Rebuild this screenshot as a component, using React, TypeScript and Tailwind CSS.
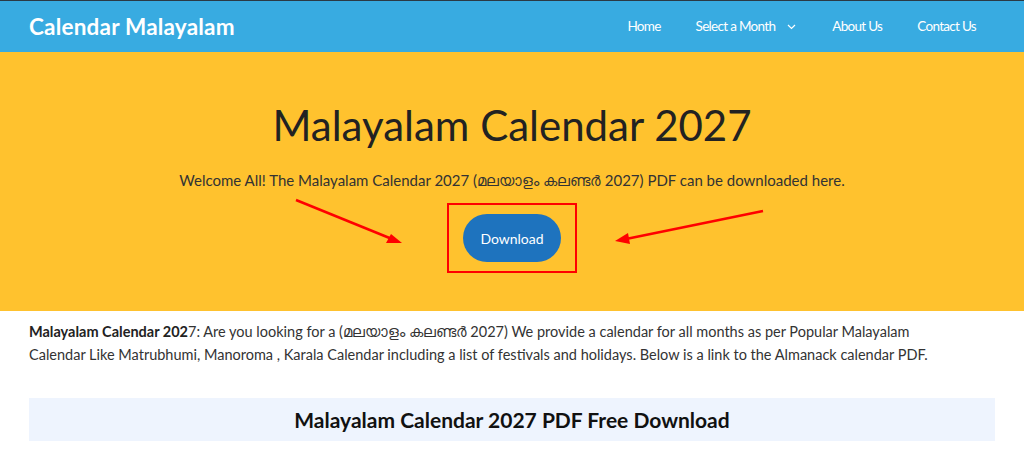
import React from "react";

const font = { fontFamily: "Lato, 'Noto Sans', sans-serif" };

export default function App() {
  return (
    <div className="w-[1024px] h-[462px] overflow-hidden bg-white text-[#222]" style={font}>
      <div className="h-px bg-[#2b3a45]" />
      <header className="h-[51px] bg-[#38abe1] flex items-center justify-between pl-[29px] pr-[48px]">
        <div className="text-white font-bold text-[22.5px] tracking-[0.2px]">Calendar Malayalam</div>
        <nav className="flex items-center text-white text-[13.5px] tracking-[-0.7px]">
          <span>Home</span>
          <span className="ml-[35px] flex items-center">
            Select a Month
            <svg className="ml-[12px]" width="9" height="6" viewBox="0 0 9 6" fill="none" stroke="white" strokeWidth="1.2">
              <path d="M1 1l3.5 3.5L8 1" />
            </svg>
          </span>
          <span className="ml-[36px]">About Us</span>
          <span className="ml-[35px]">Contact Us</span>
        </nav>
      </header>
      <section className="relative h-[259px] bg-[#ffc22e] flex flex-col items-center pt-[48px]">
        <h1 className="text-[42px] leading-[50px] font-normal text-[#222]">Malayalam Calendar 2027</h1>
        <p className="mt-[20px] text-[15px] leading-[20px] text-[#333]">
          Welcome All! The Malayalam Calendar 2027 (മലയാളം കലണ്ടർ 2027) PDF can be downloaded here.
        </p>
        <div className="mt-[13px] border-2 border-[#ff0000] px-[14px] py-[9px]">
          <button className="w-[98px] h-[48px] rounded-full bg-[#1e73be] text-white text-[14px]">Download</button>
        </div>
        <svg className="absolute left-0 top-0 pointer-events-none" width="1024" height="259" viewBox="0 0 1024 259">
          <line x1="296" y1="148" x2="392" y2="187" stroke="#ff0000" strokeWidth="2.5" />
          <polygon points="402,191 386,191 391,182" fill="#ff0000" />
          <line x1="763" y1="159" x2="626" y2="187" stroke="#ff0000" strokeWidth="2.5" />
          <polygon points="615,189 628,181 630,192" fill="#ff0000" />
        </svg>
      </section>
      <section className="px-[29px] pt-[9px]">
        <p className="text-[14.5px] leading-[23px] text-[#333] w-[930px]">
          <strong className="font-bold text-[#222]">Malayalam Calendar 202</strong>7: Are you looking for a (മലയാളം കലണ്ടർ 2027) We provide a calendar for all months as per Popular Malayalam Calendar Like Matrubhumi, Manoroma , Karala Calendar including a list of festivals and holidays. Below is a link to the Almanack calendar PDF.
        </p>
        <div className="mt-[32px] h-[43px] bg-[#eef4fe] flex items-center justify-center">
          <h2 className="text-[21px] font-bold text-[#111]">Malayalam Calendar 2027 PDF Free Download</h2>
        </div>
      </section>
    </div>
  );
}
